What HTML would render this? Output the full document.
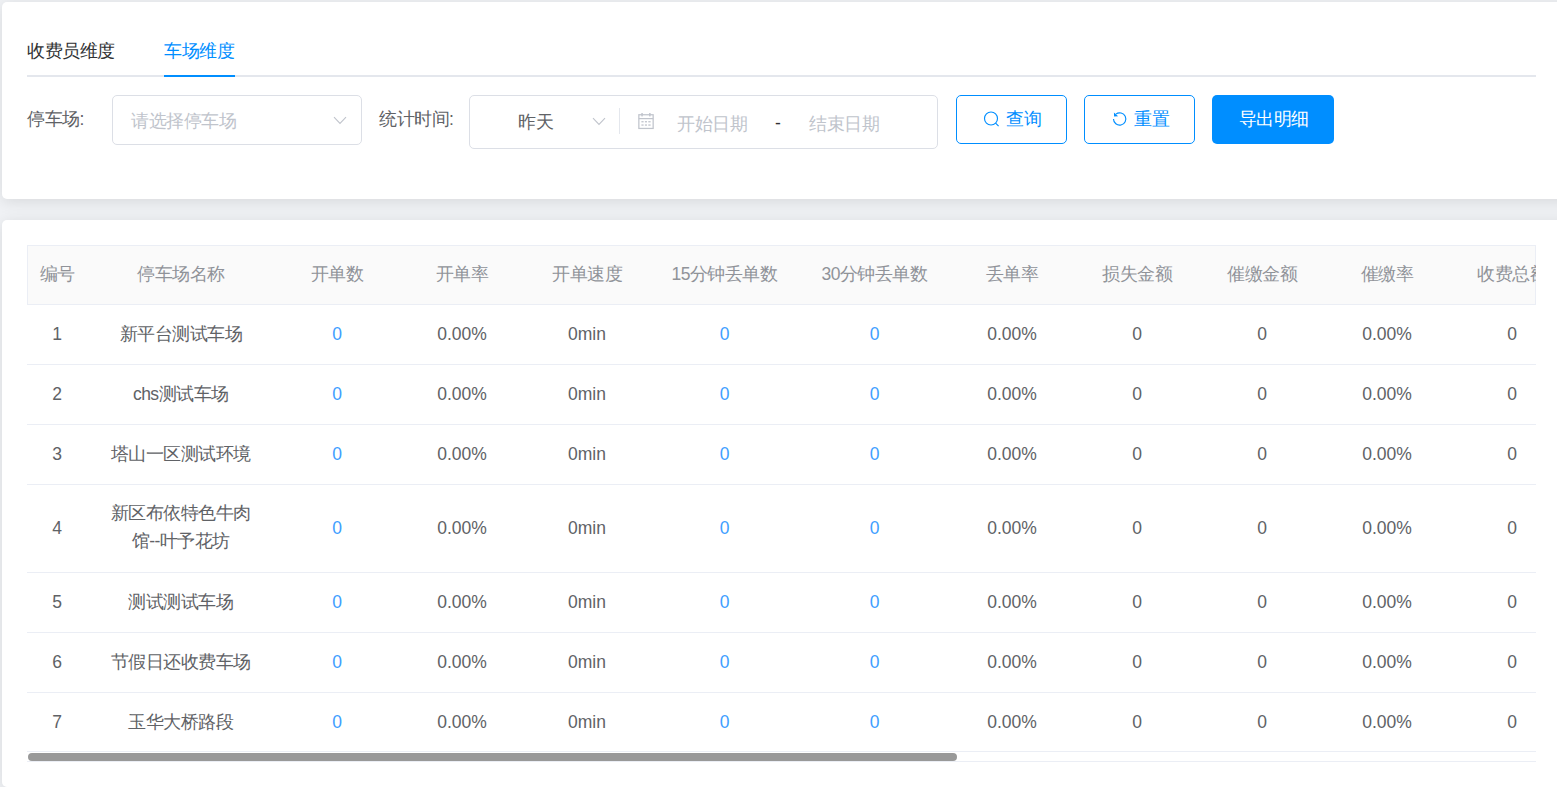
<!DOCTYPE html>
<html><head><meta charset="utf-8">
<style>
*{box-sizing:border-box;margin:0;padding:0}
html,body{width:1557px;height:787px;overflow:hidden}
body{background:#f0f2f5;font-family:"Liberation Sans",sans-serif;font-size:17.5px;color:#606266;position:relative;letter-spacing:-0.5px}
.abs{position:absolute;white-space:nowrap}
.card{position:absolute;left:2px;width:1620px;background:#fff;border-radius:5px;box-shadow:0 2.5px 15px 0 rgba(0,0,0,.1)}
#c1{top:2px;height:197px}
#c2{top:220px;height:567px}
.t{line-height:20px;height:20px}
.tabline{left:27px;top:75px;width:1509px;height:2px;background:#e4e7ed}
.tabbar{left:164px;top:75px;width:71px;height:2px;background:#008eff}
.box{border:1px solid #dcdfe6;border-radius:5px;background:#fff}
.btn{border:1px solid #008eff;border-radius:5px;background:#fff;color:#008eff}
.th,.td{position:absolute;text-align:center;line-height:20px}
.th{color:#909399}
.blue{color:#409eff}
.hl{position:absolute;left:0;width:1509px;height:1px;background:#ebeef5}
.th,.td{display:flex;align-items:center;justify-content:center;white-space:normal}
.td{line-height:28px}
</style></head><body>
<div class="card" id="c1"></div>
<div class="card" id="c2"></div>

<!-- tabs -->
<div class="abs t" style="left:27px;top:41px;color:#303133">收费员维度</div>
<div class="abs t" style="left:164px;top:41px;color:#008eff">车场维度</div>
<div class="abs tabline"></div>
<div class="abs tabbar"></div>

<!-- filter row -->
<div class="abs t" style="left:27px;top:109px">停车场:</div>
<div class="abs box" style="left:112px;top:95px;width:250px;height:50px"></div>
<div class="abs t" style="left:131px;top:111px;color:#c0c4cc">请选择停车场</div>
<svg class="abs" style="left:333px;top:116px" width="14" height="9" viewBox="0 0 14 9"><path d="M1 1.2 L7 7.5 L13 1.2" fill="none" stroke="#c0c4cc" stroke-width="1.1"/></svg>

<div class="abs t" style="left:379px;top:109px">统计时间:</div>
<div class="abs box" style="left:469px;top:95px;width:469px;height:54px"></div>
<div class="abs t" style="left:518px;top:112px;color:#606266">昨天</div>
<svg class="abs" style="left:592px;top:117px" width="14" height="9" viewBox="0 0 14 9"><path d="M1 1.2 L7 7.5 L13 1.2" fill="none" stroke="#c0c4cc" stroke-width="1.1"/></svg>
<div class="abs" style="left:619px;top:108px;width:1px;height:26px;background:#e4e7ed"></div>
<svg class="abs" style="left:636px;top:111px" width="20" height="20" viewBox="0 0 20 20">
<g fill="none" stroke="#c0c4cc" stroke-width="1.25"><rect x="2.85" y="3.75" width="14.3" height="13.7"/><line x1="2.85" y1="7.6" x2="17.15" y2="7.6"/></g>
<g fill="#c0c4cc"><rect x="5.3" y="2" width="1.5" height="3.4"/><rect x="13.1" y="2" width="1.5" height="3.4"/>
<rect x="5.4" y="10.1" width="2.2" height="1.3"/><rect x="8.9" y="10.1" width="2.1" height="1.3"/><rect x="12.3" y="10.1" width="2.3" height="1.3"/>
<rect x="5.4" y="13.4" width="2.2" height="1.3"/><rect x="8.9" y="13.4" width="2.1" height="1.3"/><rect x="12.3" y="13.4" width="2.3" height="1.3"/></g>
</svg>
<div class="abs t" style="left:677px;top:114px;color:#c0c4cc">开始日期</div>
<div class="abs t" style="left:775px;top:113px;color:#303133">-</div>
<div class="abs t" style="left:809px;top:114px;color:#c0c4cc">结束日期</div>

<!-- buttons -->
<div class="abs btn" style="left:956px;top:95px;width:111px;height:49px"></div>
<svg class="abs" style="left:981px;top:109px" width="20" height="20" viewBox="0 0 20 20"><circle cx="10" cy="9.5" r="6.5" fill="none" stroke="#008eff" stroke-width="1.15"/><line x1="14.6" y1="14.1" x2="17.6" y2="17.2" stroke="#008eff" stroke-width="1.2"/></svg>
<div class="abs t" style="left:1006px;top:109px;color:#008eff">查询</div>
<div class="abs btn" style="left:1084px;top:95px;width:111px;height:49px"></div>
<svg class="abs" style="left:1110px;top:109px" width="20" height="20" viewBox="0 0 20 20"><path d="M3.5 10 A6.15 6.15 0 1 0 5.9 5.1" fill="none" stroke="#008eff" stroke-width="1.15"/><path d="M3.9 3.6 L4.1 7.6 L8.1 7.3 Z" fill="#008eff"/></svg>
<div class="abs t" style="left:1134px;top:109px;color:#008eff">重置</div>
<div class="abs" style="left:1212px;top:95px;width:122px;height:49px;background:#008eff;border-radius:5px"></div>
<div class="abs t" style="left:1238.5px;top:109px;color:#fff">导出明细</div>

<!-- table -->
<div id="tbl" class="abs" style="left:27px;top:245px;width:1509px;height:520px;overflow:hidden">
<!--TBL-->
<div style="position:absolute;left:0;top:0;width:1509px;height:60px;background:#fafafa;border:1px solid #ebeef5;border-bottom:none"></div>
<div class="hl" style="top:59px"></div>
<div class="hl" style="top:119px"></div>
<div class="hl" style="top:179px"></div>
<div class="hl" style="top:239px"></div>
<div class="hl" style="top:327px"></div>
<div class="hl" style="top:387px"></div>
<div class="hl" style="top:447px"></div>
<div class="hl" style="top:506px"></div>
<div class="hl" style="top:516px"></div>
<div class="th" style="left:0px;top:0px;width:60px;height:57px">编号</div>
<div class="th" style="left:60px;top:0px;width:187.5px;height:57px">停车场名称</div>
<div class="th" style="left:247.5px;top:0px;width:125.0px;height:57px">开单数</div>
<div class="th" style="left:372.5px;top:0px;width:125.0px;height:57px">开单率</div>
<div class="th" style="left:497.5px;top:0px;width:125.0px;height:57px">开单速度</div>
<div class="th" style="left:622.5px;top:0px;width:150.0px;height:57px">15分钟丢单数</div>
<div class="th" style="left:772.5px;top:0px;width:150.0px;height:57px">30分钟丢单数</div>
<div class="th" style="left:922.5px;top:0px;width:125.0px;height:57px">丢单率</div>
<div class="th" style="left:1047.5px;top:0px;width:125.0px;height:57px">损失金额</div>
<div class="th" style="left:1172.5px;top:0px;width:125.0px;height:57px">催缴金额</div>
<div class="th" style="left:1297.5px;top:0px;width:125.0px;height:57px">催缴率</div>
<div class="th" style="left:1422.5px;top:0px;width:125.0px;height:57px">收费总额</div>
<div class="td" style="left:0px;top:60px;width:60px;height:59px;padding-bottom:2px;letter-spacing:0">1</div>
<div class="td" style="left:60px;top:60px;width:187.5px;height:59px;padding-bottom:2px">新平台测试车场</div>
<div class="td" style="left:247.5px;top:60px;width:125.0px;height:59px;padding-bottom:2px;letter-spacing:0"><span class="blue">0</span></div>
<div class="td" style="left:372.5px;top:60px;width:125.0px;height:59px;padding-bottom:2px;letter-spacing:0">0.00%</div>
<div class="td" style="left:497.5px;top:60px;width:125.0px;height:59px;padding-bottom:2px;letter-spacing:0">0min</div>
<div class="td" style="left:622.5px;top:60px;width:150.0px;height:59px;padding-bottom:2px;letter-spacing:0"><span class="blue">0</span></div>
<div class="td" style="left:772.5px;top:60px;width:150.0px;height:59px;padding-bottom:2px;letter-spacing:0"><span class="blue">0</span></div>
<div class="td" style="left:922.5px;top:60px;width:125.0px;height:59px;padding-bottom:2px;letter-spacing:0">0.00%</div>
<div class="td" style="left:1047.5px;top:60px;width:125.0px;height:59px;padding-bottom:2px;letter-spacing:0">0</div>
<div class="td" style="left:1172.5px;top:60px;width:125.0px;height:59px;padding-bottom:2px;letter-spacing:0">0</div>
<div class="td" style="left:1297.5px;top:60px;width:125.0px;height:59px;padding-bottom:2px;letter-spacing:0">0.00%</div>
<div class="td" style="left:1422.5px;top:60px;width:125.0px;height:59px;padding-bottom:2px;letter-spacing:0">0</div>
<div class="td" style="left:0px;top:120px;width:60px;height:59px;padding-bottom:2px;letter-spacing:0">2</div>
<div class="td" style="left:60px;top:120px;width:187.5px;height:59px;padding-bottom:2px">chs测试车场</div>
<div class="td" style="left:247.5px;top:120px;width:125.0px;height:59px;padding-bottom:2px;letter-spacing:0"><span class="blue">0</span></div>
<div class="td" style="left:372.5px;top:120px;width:125.0px;height:59px;padding-bottom:2px;letter-spacing:0">0.00%</div>
<div class="td" style="left:497.5px;top:120px;width:125.0px;height:59px;padding-bottom:2px;letter-spacing:0">0min</div>
<div class="td" style="left:622.5px;top:120px;width:150.0px;height:59px;padding-bottom:2px;letter-spacing:0"><span class="blue">0</span></div>
<div class="td" style="left:772.5px;top:120px;width:150.0px;height:59px;padding-bottom:2px;letter-spacing:0"><span class="blue">0</span></div>
<div class="td" style="left:922.5px;top:120px;width:125.0px;height:59px;padding-bottom:2px;letter-spacing:0">0.00%</div>
<div class="td" style="left:1047.5px;top:120px;width:125.0px;height:59px;padding-bottom:2px;letter-spacing:0">0</div>
<div class="td" style="left:1172.5px;top:120px;width:125.0px;height:59px;padding-bottom:2px;letter-spacing:0">0</div>
<div class="td" style="left:1297.5px;top:120px;width:125.0px;height:59px;padding-bottom:2px;letter-spacing:0">0.00%</div>
<div class="td" style="left:1422.5px;top:120px;width:125.0px;height:59px;padding-bottom:2px;letter-spacing:0">0</div>
<div class="td" style="left:0px;top:180px;width:60px;height:59px;padding-bottom:2px;letter-spacing:0">3</div>
<div class="td" style="left:60px;top:180px;width:187.5px;height:59px;padding-bottom:2px">塔山一区测试环境</div>
<div class="td" style="left:247.5px;top:180px;width:125.0px;height:59px;padding-bottom:2px;letter-spacing:0"><span class="blue">0</span></div>
<div class="td" style="left:372.5px;top:180px;width:125.0px;height:59px;padding-bottom:2px;letter-spacing:0">0.00%</div>
<div class="td" style="left:497.5px;top:180px;width:125.0px;height:59px;padding-bottom:2px;letter-spacing:0">0min</div>
<div class="td" style="left:622.5px;top:180px;width:150.0px;height:59px;padding-bottom:2px;letter-spacing:0"><span class="blue">0</span></div>
<div class="td" style="left:772.5px;top:180px;width:150.0px;height:59px;padding-bottom:2px;letter-spacing:0"><span class="blue">0</span></div>
<div class="td" style="left:922.5px;top:180px;width:125.0px;height:59px;padding-bottom:2px;letter-spacing:0">0.00%</div>
<div class="td" style="left:1047.5px;top:180px;width:125.0px;height:59px;padding-bottom:2px;letter-spacing:0">0</div>
<div class="td" style="left:1172.5px;top:180px;width:125.0px;height:59px;padding-bottom:2px;letter-spacing:0">0</div>
<div class="td" style="left:1297.5px;top:180px;width:125.0px;height:59px;padding-bottom:2px;letter-spacing:0">0.00%</div>
<div class="td" style="left:1422.5px;top:180px;width:125.0px;height:59px;padding-bottom:2px;letter-spacing:0">0</div>
<div class="td" style="left:0px;top:240px;width:60px;height:87px;padding-bottom:2px;letter-spacing:0">4</div>
<div class="td" style="left:60px;top:240px;width:187.5px;height:87px;padding-bottom:3px">新区布依特色牛肉<br>馆--叶予花坊</div>
<div class="td" style="left:247.5px;top:240px;width:125.0px;height:87px;padding-bottom:2px;letter-spacing:0"><span class="blue">0</span></div>
<div class="td" style="left:372.5px;top:240px;width:125.0px;height:87px;padding-bottom:2px;letter-spacing:0">0.00%</div>
<div class="td" style="left:497.5px;top:240px;width:125.0px;height:87px;padding-bottom:2px;letter-spacing:0">0min</div>
<div class="td" style="left:622.5px;top:240px;width:150.0px;height:87px;padding-bottom:2px;letter-spacing:0"><span class="blue">0</span></div>
<div class="td" style="left:772.5px;top:240px;width:150.0px;height:87px;padding-bottom:2px;letter-spacing:0"><span class="blue">0</span></div>
<div class="td" style="left:922.5px;top:240px;width:125.0px;height:87px;padding-bottom:2px;letter-spacing:0">0.00%</div>
<div class="td" style="left:1047.5px;top:240px;width:125.0px;height:87px;padding-bottom:2px;letter-spacing:0">0</div>
<div class="td" style="left:1172.5px;top:240px;width:125.0px;height:87px;padding-bottom:2px;letter-spacing:0">0</div>
<div class="td" style="left:1297.5px;top:240px;width:125.0px;height:87px;padding-bottom:2px;letter-spacing:0">0.00%</div>
<div class="td" style="left:1422.5px;top:240px;width:125.0px;height:87px;padding-bottom:2px;letter-spacing:0">0</div>
<div class="td" style="left:0px;top:328px;width:60px;height:59px;padding-bottom:2px;letter-spacing:0">5</div>
<div class="td" style="left:60px;top:328px;width:187.5px;height:59px;padding-bottom:2px">测试测试车场</div>
<div class="td" style="left:247.5px;top:328px;width:125.0px;height:59px;padding-bottom:2px;letter-spacing:0"><span class="blue">0</span></div>
<div class="td" style="left:372.5px;top:328px;width:125.0px;height:59px;padding-bottom:2px;letter-spacing:0">0.00%</div>
<div class="td" style="left:497.5px;top:328px;width:125.0px;height:59px;padding-bottom:2px;letter-spacing:0">0min</div>
<div class="td" style="left:622.5px;top:328px;width:150.0px;height:59px;padding-bottom:2px;letter-spacing:0"><span class="blue">0</span></div>
<div class="td" style="left:772.5px;top:328px;width:150.0px;height:59px;padding-bottom:2px;letter-spacing:0"><span class="blue">0</span></div>
<div class="td" style="left:922.5px;top:328px;width:125.0px;height:59px;padding-bottom:2px;letter-spacing:0">0.00%</div>
<div class="td" style="left:1047.5px;top:328px;width:125.0px;height:59px;padding-bottom:2px;letter-spacing:0">0</div>
<div class="td" style="left:1172.5px;top:328px;width:125.0px;height:59px;padding-bottom:2px;letter-spacing:0">0</div>
<div class="td" style="left:1297.5px;top:328px;width:125.0px;height:59px;padding-bottom:2px;letter-spacing:0">0.00%</div>
<div class="td" style="left:1422.5px;top:328px;width:125.0px;height:59px;padding-bottom:2px;letter-spacing:0">0</div>
<div class="td" style="left:0px;top:388px;width:60px;height:59px;padding-bottom:2px;letter-spacing:0">6</div>
<div class="td" style="left:60px;top:388px;width:187.5px;height:59px;padding-bottom:2px">节假日还收费车场</div>
<div class="td" style="left:247.5px;top:388px;width:125.0px;height:59px;padding-bottom:2px;letter-spacing:0"><span class="blue">0</span></div>
<div class="td" style="left:372.5px;top:388px;width:125.0px;height:59px;padding-bottom:2px;letter-spacing:0">0.00%</div>
<div class="td" style="left:497.5px;top:388px;width:125.0px;height:59px;padding-bottom:2px;letter-spacing:0">0min</div>
<div class="td" style="left:622.5px;top:388px;width:150.0px;height:59px;padding-bottom:2px;letter-spacing:0"><span class="blue">0</span></div>
<div class="td" style="left:772.5px;top:388px;width:150.0px;height:59px;padding-bottom:2px;letter-spacing:0"><span class="blue">0</span></div>
<div class="td" style="left:922.5px;top:388px;width:125.0px;height:59px;padding-bottom:2px;letter-spacing:0">0.00%</div>
<div class="td" style="left:1047.5px;top:388px;width:125.0px;height:59px;padding-bottom:2px;letter-spacing:0">0</div>
<div class="td" style="left:1172.5px;top:388px;width:125.0px;height:59px;padding-bottom:2px;letter-spacing:0">0</div>
<div class="td" style="left:1297.5px;top:388px;width:125.0px;height:59px;padding-bottom:2px;letter-spacing:0">0.00%</div>
<div class="td" style="left:1422.5px;top:388px;width:125.0px;height:59px;padding-bottom:2px;letter-spacing:0">0</div>
<div class="td" style="left:0px;top:448px;width:60px;height:58px;padding-bottom:1px;letter-spacing:0">7</div>
<div class="td" style="left:60px;top:448px;width:187.5px;height:58px;padding-bottom:1px">玉华大桥路段</div>
<div class="td" style="left:247.5px;top:448px;width:125.0px;height:58px;padding-bottom:1px;letter-spacing:0"><span class="blue">0</span></div>
<div class="td" style="left:372.5px;top:448px;width:125.0px;height:58px;padding-bottom:1px;letter-spacing:0">0.00%</div>
<div class="td" style="left:497.5px;top:448px;width:125.0px;height:58px;padding-bottom:1px;letter-spacing:0">0min</div>
<div class="td" style="left:622.5px;top:448px;width:150.0px;height:58px;padding-bottom:1px;letter-spacing:0"><span class="blue">0</span></div>
<div class="td" style="left:772.5px;top:448px;width:150.0px;height:58px;padding-bottom:1px;letter-spacing:0"><span class="blue">0</span></div>
<div class="td" style="left:922.5px;top:448px;width:125.0px;height:58px;padding-bottom:1px;letter-spacing:0">0.00%</div>
<div class="td" style="left:1047.5px;top:448px;width:125.0px;height:58px;padding-bottom:1px;letter-spacing:0">0</div>
<div class="td" style="left:1172.5px;top:448px;width:125.0px;height:58px;padding-bottom:1px;letter-spacing:0">0</div>
<div class="td" style="left:1297.5px;top:448px;width:125.0px;height:58px;padding-bottom:1px;letter-spacing:0">0.00%</div>
<div class="td" style="left:1422.5px;top:448px;width:125.0px;height:58px;padding-bottom:1px;letter-spacing:0">0</div>
<div style="position:absolute;left:1px;top:508px;width:929px;height:8px;border-radius:4px;background:#999"></div>
<!--/TBL-->
</div>
</body></html>
